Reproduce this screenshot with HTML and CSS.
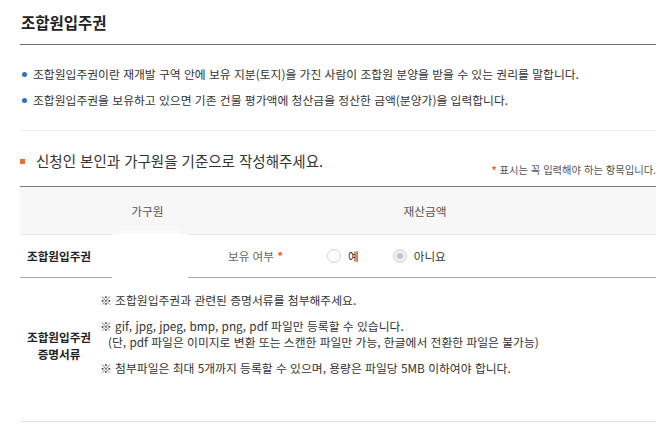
FILE: index.html
```html
<!DOCTYPE html>
<html lang="ko">
<head>
    <meta charset="UTF-8">
    <meta name="viewport" content="width=device-width, initial-scale=1.0">
    <title>조합원입주권</title>
    <link rel="stylesheet" href="styles.css">
</head>
<body>
    <div class="wrap">
        <h2 class="page-title">조합원입주권</h2>

        <ul class="guide">
            <li>조합원입주권이란 재개발 구역 안에 보유 지분(토지)을 가진 사람이 조합원 분양을 받을 수 있는 권리를 말합니다.</li>
            <li>조합원입주권을 보유하고 있으면 기존 건물 평가액에 청산금을 정산한 금액(분양가)을 입력합니다.</li>
        </ul>

        <div class="section-head">
            <h3 class="section-title">신청인 본인과 가구원을 기준으로 작성해주세요.</h3>
            <p class="required-note"><span class="star">*</span> 표시는 꼭 입력해야 하는 항목입니다.</p>
        </div>

        <div class="form-table">
            <div class="table-head">
                <span class="head-cell">가구원</span>
                <span class="head-cell">재산금액</span>
            </div>

            <div class="table-row row-own">
                <div class="row-label">조합원입주권</div>
                <div class="row-body">
                    <span class="field-label">보유 여부 <span class="star">*</span></span>
                    <label class="radio"><span class="radio-dot"></span>예</label>
                    <label class="radio is-disabled"><span class="radio-dot checked"></span>아니요</label>
                </div>
            </div>

            <div class="table-row row-docs">
                <div class="row-label">조합원입주권<br>증명서류</div>
                <div class="row-body notes">
                    <p class="note">※ 조합원입주권과 관련된 증명서류를 첨부해주세요.</p>
                    <p class="note">※ gif, jpg, jpeg, bmp, png, pdf 파일만 등록할 수 있습니다.<br>(단, pdf 파일은 이미지로 변환 또는 스캔한 파일만 가능, 한글에서 전환한 파일은 불가능)</p>
                    <p class="note">※ 첨부파일은 최대 5개까지 등록할 수 있으며, 용량은 파일당 5MB 이하여야 합니다.</p>
                </div>
            </div>

            <div class="member-box"></div>
        </div>
    </div>
</body>
</html>
```

FILE: styles.css
```css
body {
    margin: 0;
    background-color: #fff;
    color: #333;
    font-family: "Noto Sans CJK KR", "Noto Sans", sans-serif;
}
.wrap {
    width: 636px;
    padding-left: 20px;
}
.page-title {
    margin: 0;
    padding: 12px 0 12px 1px;
    font-size: 15.5px;
    line-height: 20px;
    font-weight: bold;
    color: #222;
    border-bottom: 1px solid #6b6b6b;
}
.guide {
    list-style: none;
    margin: 0;
    padding: 16px 0 17px 0;
    border-bottom: 1px solid #ececec;
}
.guide li {
    position: relative;
    padding-left: 13px;
    font-size: 11.8px;
    line-height: 26px;
    color: #333;
}
.guide li:before {
    content: "";
    position: absolute;
    left: 2px;
    top: 11px;
    width: 5px;
    height: 5px;
    border-radius: 50%;
    background: #2e6fc9;
}
.section-head {
    display: flex;
    justify-content: space-between;
    align-items: flex-end;
    padding: 20px 0 9px 0;
}
.section-title {
    position: relative;
    margin: 0 0 6px 0;
    padding-left: 16px;
    font-size: 14.5px;
    line-height: 20px;
    font-weight: normal;
    color: #333;
}
.section-title:before {
    content: "";
    position: absolute;
    left: 0;
    top: 8px;
    width: 5px;
    height: 5px;
    background: #e8703a;
}
.required-note {
    margin: 0;
    font-size: 10.3px;
    line-height: 14px;
    color: #555;
}
.star {
    color: #e0641e;
    font-weight: bold;
}
.form-table {
    position: relative;
    border-top: 1px solid #7a7a7a;
}
.table-head {
    display: grid;
    grid-template-columns: 255px 300px 1fr;
    height: 47px;
    align-items: center;
    background: #f7f7f7;
    border-bottom: 1px solid #e8e8e8;
}
.head-cell {
    text-align: center;
    font-size: 11.7px;
    color: #555;
}
.table-row {
    display: grid;
    grid-template-columns: 78px 1fr;
}
.row-own {
    height: 42px;
    align-items: center;
    border-bottom: 1px solid #a8a8a8;
}
.row-docs {
    height: 143px;
    align-items: center;
    border-bottom: 1px solid #e2e2e2;
}
.row-label {
    text-align: center;
    font-size: 11.6px;
    line-height: 17px;
    font-weight: bold;
    color: #222;
}
.row-docs .row-label {
    margin-bottom: 8px;
}
.row-own .row-body {
    display: flex;
    align-items: center;
    padding-left: 130px;
    font-size: 11.6px;
}
.field-label {
    color: #666;
    margin-right: 44px;
}
.radio {
    display: flex;
    align-items: center;
    gap: 7px;
    margin-right: 34px;
    color: #333;
}
.radio-dot {
    position: relative;
    width: 12px;
    height: 12px;
    border: 1px solid #d2d2d2;
    border-radius: 50%;
    background: #fff;
}
.radio-dot.checked {
    background: #f0f0f0;
}
.radio-dot.checked:after {
    content: "";
    position: absolute;
    left: 3px;
    top: 3px;
    width: 6px;
    height: 6px;
    border-radius: 50%;
    background: #c4c4c4;
}
.notes {
    align-self: start;
    padding: 14px 0 0 2px;
}
.note {
    margin: 0 0 10px 0;
    padding-left: 8px;
    text-indent: -8px;
    font-size: 11.8px;
    line-height: 16px;
    color: #333;
}
.member-box {
    position: absolute;
    left: 92px;
    top: 47px;
    width: 76px;
    height: 44px;
    background: #fff;
}
.member-box:before {
    content: "";
    position: absolute;
    left: 7px;
    top: -4px;
    width: 60px;
    height: 4px;
    background: #fbfbfb;
}
```
